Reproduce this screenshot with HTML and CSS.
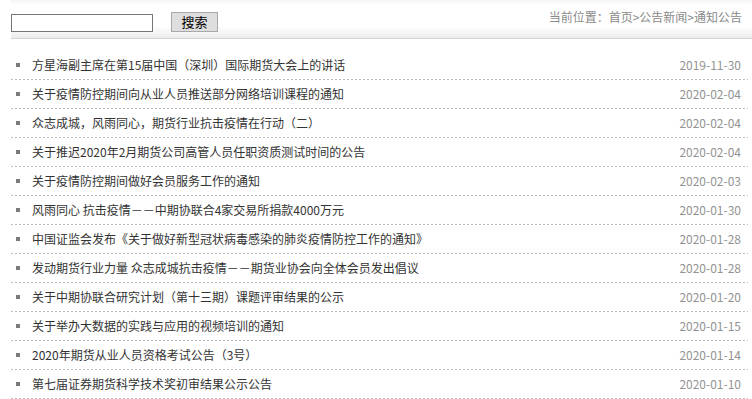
FILE: index.html
```html
<!DOCTYPE html>
<html lang="zh-CN">
<head>
<meta charset="utf-8">
<title>通知公告</title>
<link rel="stylesheet" href="styles.css">
</head>
<body>
<div class="page">
  <div class="topbar">
    <form class="search">
      <input class="search-input" type="text">
      <button class="search-btn" type="button">搜索</button>
    </form>
    <div class="crumb">当前位置：首页&gt;公告新闻&gt;通知公告</div>
  </div>
  <ul class="news">
    <li class="item"><span class="dot"></span><a class="title">方星海副主席在第15届中国（深圳）国际期货大会上的讲话</a><span class="date">2019-11-30</span></li>
    <li class="item"><span class="dot"></span><a class="title">关于疫情防控期间向从业人员推送部分网络培训课程的通知</a><span class="date">2020-02-04</span></li>
    <li class="item"><span class="dot"></span><a class="title">众志成城，风雨同心，期货行业抗击疫情在行动（二）</a><span class="date">2020-02-04</span></li>
    <li class="item"><span class="dot"></span><a class="title">关于推迟2020年2月期货公司高管人员任职资质测试时间的公告</a><span class="date">2020-02-04</span></li>
    <li class="item"><span class="dot"></span><a class="title">关于疫情防控期间做好会员服务工作的通知</a><span class="date">2020-02-03</span></li>
    <li class="item"><span class="dot"></span><a class="title">风雨同心 抗击疫情－－中期协联合4家交易所捐款4000万元</a><span class="date">2020-01-30</span></li>
    <li class="item"><span class="dot"></span><a class="title">中国证监会发布《关于做好新型冠状病毒感染的肺炎疫情防控工作的通知》</a><span class="date">2020-01-28</span></li>
    <li class="item"><span class="dot"></span><a class="title">发动期货行业力量 众志成城抗击疫情－－期货业协会向全体会员发出倡议</a><span class="date">2020-01-28</span></li>
    <li class="item"><span class="dot"></span><a class="title">关于中期协联合研究计划（第十三期）课题评审结果的公示</a><span class="date">2020-01-20</span></li>
    <li class="item"><span class="dot"></span><a class="title">关于举办大数据的实践与应用的视频培训的通知</a><span class="date">2020-01-15</span></li>
    <li class="item"><span class="dot"></span><a class="title">2020年期货从业人员资格考试公告（3号）</a><span class="date">2020-01-14</span></li>
    <li class="item"><span class="dot"></span><a class="title">第七届证券期货科学技术奖初审结果公示公告</a><span class="date">2020-01-10</span></li>
  </ul>
</div>
</body>
</html>
```

FILE: styles.css
```css
html, body {
  margin: 0;
  padding: 0;
  background: #fff;
}
body {
  font-family: "Noto Sans CJK SC", "Noto Sans", sans-serif;
  font-size: 12px;
  color: #333;
}
.page {
  padding-left: 11px;
}
.topbar {
  height: 38px;
  border-bottom: 1px solid #d2d2d2;
  background: linear-gradient(to bottom, #f4f4f4 0, #ffffff 5px, #ffffff 26px, #ececec 38px);
  display: flex;
  justify-content: space-between;
  align-items: flex-start;
  padding-right: 10px;
}
.search {
  display: flex;
  align-items: flex-start;
  margin: 0;
  padding-top: 12px;
}
.search-input {
  box-sizing: border-box;
  width: 142px;
  height: 18px;
  margin: 2px 0 0 0;
  padding: 0 2px;
  border: 1px solid #767676;
  background: #fff;
  outline: none;
}
.search-btn {
  box-sizing: border-box;
  width: 47px;
  height: 20px;
  margin: 0 0 0 18px;
  padding: 0;
  border: 1px solid #a9a9a9;
  background: #dedede;
  color: #000;
  font-family: "Noto Sans CJK SC", sans-serif;
  font-size: 13px;
  line-height: 18px;
}
.crumb {
  padding-top: 9px;
  line-height: 16px;
  color: #8a8a8a;
  font-size: 12px;
}
.news {
  list-style: none;
  margin: 12px 4px 0 0;
  padding: 0;
}
.item {
  height: 28px;
  padding-bottom: 1px;
  display: flex;
  align-items: center;
  background: linear-gradient(to right, #bdbdbd 50%, transparent 50%) left bottom / 4px 1px repeat-x;
}
.dot {
  width: 4px;
  height: 4px;
  background: #7a7a7a;
  margin-left: 5px;
  margin-right: 12px;
  flex: none;
}
.title {
  flex: 1;
  color: #333;
  text-decoration: none;
  white-space: nowrap;
  line-height: 28px;
}
.date {
  color: #939393;
  margin-right: 7px;
  line-height: 28px;
}
```
